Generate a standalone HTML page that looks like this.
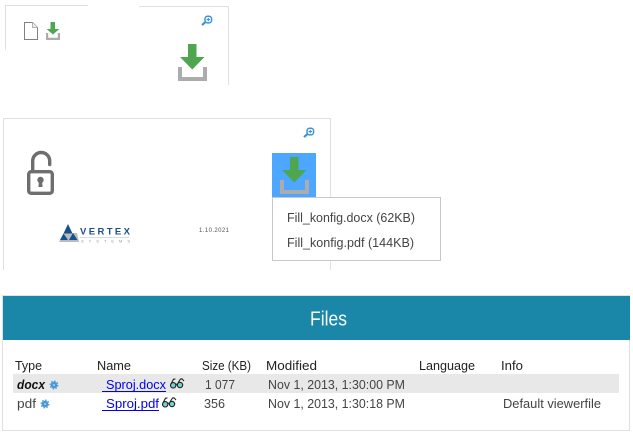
<!DOCTYPE html>
<html><head><meta charset="utf-8"><style>
html,body{margin:0;padding:0;background:#fff;width:633px;height:437px;overflow:hidden}
svg{display:block}
text{font-family:"Liberation Sans",sans-serif;font-size:13px;fill:#444}
.h{fill:#222}
.soft{filter:blur(.35px)}
</style></head><body>
<svg width="633" height="437" viewBox="0 0 633 437" xmlns="http://www.w3.org/2000/svg">
<defs>
<g id="dl">
<path d="M0 23h4v10h21V23H29v14H0z" fill="#acacac"/>
<path d="M10 0h8.500v13H26.500L14.300 25.500 2 13h8z" fill="#4ea64e"/>
</g>
<g id="zoom" fill="none">
<rect x="4" y="0.800" width="6.600" height="6.600" rx="2.600" stroke="#3c94e0" stroke-width="1.500"/>
<path d="M5.600 4.100h3.400M7.300 2.400v3.400" stroke="#3c94e0" stroke-width="1.100"/>
<path d="M4.300 6.700L1 9.600" stroke="#3c94e0" stroke-width="2.200"/>
</g>
<g id="gear">
<circle cx="4" cy="4" r="3.400" fill="#4a98d8"/>
<circle cx="4" cy="4" r="3.900" fill="none" stroke="#4a98d8" stroke-width="1.200" stroke-dasharray="1.500 1.560"/>
<circle cx="4" cy="4" r="1" fill="#a8d0f0"/>
</g>
<g id="glasses" fill="none" stroke="#222" stroke-width="1.100">
<circle cx="3.200" cy="7.300" r="2.700" fill="#6fd3d3"/>
<circle cx="10" cy="7" r="2.700" fill="#6fd3d3"/>
<path d="M5.800 6.500c.6-.5 1-.5 1.600 0M1 6L3.500 1.200L5.500 1M8 5L10.500 1L12 .8L14 3"/>
</g>
</defs>

<!-- top panel -->
<rect x="5" y="5" width="83" height="1" fill="#e0e0e0"/>
<rect x="5" y="5" width="1" height="45" fill="#e0e0e0"/>
<rect x="139" y="6" width="90" height="1" fill="#e0e0e0"/>
<rect x="228" y="6" width="1" height="79" fill="#e0e0e0"/>
<path d="M24.500 22.500h8l5 5v12h-13z" fill="#fff" stroke="#808080"/>
<path d="M32.500 22.500v5h5" fill="#eee" stroke="#b0b0b0"/>
<path d="M46 33h2.200v4.700h9.600V33H60v7H46z" fill="#acacac"/>
<path d="M50.500 22h4.500v7h4.300L53 34.500 46.700 29h3.800z" fill="#4ea64e"/>
<use href="#zoom" x="201" y="15.500"/>
<use href="#dl" x="178" y="44" class="soft"/>

<!-- second panel -->
<rect x="3" y="118" width="328" height="1" fill="#e0e0e0"/>
<rect x="3" y="118" width="1" height="152" fill="#e0e0e0"/>
<rect x="330" y="118" width="1" height="152" fill="#e0e0e0"/>
<use href="#zoom" x="303" y="127.500"/>
<g class="soft">
<path d="M32.700 171v-10a8.500 8.500 0 0 1 17 0v3.500" fill="none" stroke="#6e6e6e" stroke-width="3.400" stroke-linecap="round"/>
<rect x="28.700" y="171.700" width="23.600" height="21.600" rx="2.500" fill="#fff" stroke="#6e6e6e" stroke-width="3.400"/>
<circle cx="40.500" cy="180" r="3.200" fill="#6e6e6e"/>
<path d="M39 181h3l.6 6h-4.200z" fill="#6e6e6e"/>
</g>

<!-- logo -->
<g style="filter:blur(.3px)">
<path d="M59 242l5-9h13l2 9z" fill="#bbb"/>
<path d="M68 224l4.500 9.500h-9z M63.500 233.500l4.500 6.500h-8z M73 233l4.500 7h-8.500z" fill="#17508f"/>
<text x="80" y="234.500" textLength="50" style="font-size:9.500px;font-weight:bold;fill:#1b4f8a">VERTEX</text>
<rect x="80" y="237" width="49" height="1" fill="#d8dde5"/>
<text x="81" y="242.500" textLength="49" style="font-size:4px;fill:#8a97a8">SYSTEMS</text>
<text x="199" y="232" textLength="30" style="font-size:6px;fill:#555">1.10.2021</text>
</g>

<!-- button + menu -->
<rect x="272" y="153" width="44" height="44" fill="#4da6ff"/>
<use href="#dl" x="280" y="157" class="soft"/>
<rect x="272.500" y="197.500" width="168" height="63" fill="#fff" stroke="#c8c8c8"/>
<text x="287" y="222" textLength="128" lengthAdjust="spacingAndGlyphs">Fill_konfig.docx (62KB)</text>
<text x="287" y="247" textLength="127" lengthAdjust="spacingAndGlyphs">Fill_konfig.pdf (144KB)</text>

<!-- files panel -->
<rect x="2.500" y="295.500" width="627" height="135" fill="#fff" stroke="#e0e0e0"/>
<rect x="3" y="296" width="627" height="44" fill="#1b87a8"/>
<text x="310" y="325.500" textLength="37" lengthAdjust="spacingAndGlyphs" style="font-size:20.500px;fill:#f4fbfd">Files</text>

<text class="h" x="15" y="370" textLength="27" lengthAdjust="spacingAndGlyphs">Type</text>
<text class="h" x="97" y="370" textLength="34" lengthAdjust="spacingAndGlyphs">Name</text>
<text class="h" x="202" y="370" textLength="49" lengthAdjust="spacingAndGlyphs">Size (KB)</text>
<text class="h" x="266" y="370" textLength="51" lengthAdjust="spacingAndGlyphs">Modified</text>
<text class="h" x="419" y="370" textLength="56" lengthAdjust="spacingAndGlyphs">Language</text>
<text class="h" x="501" y="370" textLength="22" lengthAdjust="spacingAndGlyphs">Info</text>

<rect x="13" y="374" width="606" height="19" fill="#e8e8e8"/>
<text x="17" y="389" textLength="28" lengthAdjust="spacingAndGlyphs" style="font-weight:bold;font-style:italic;fill:#111">docx</text>
<use href="#gear" x="50" y="381"/>
<rect x="102" y="391" width="64" height="1" fill="#0000ee"/>
<text x="106" y="389" textLength="60" lengthAdjust="spacingAndGlyphs" style="fill:#0000ee">Sproj.docx</text>
<use href="#glasses" x="170" y="378"/>
<text x="205" y="389" textLength="30" lengthAdjust="spacingAndGlyphs">1 077</text>
<text x="268" y="389" textLength="137" lengthAdjust="spacingAndGlyphs">Nov 1, 2013, 1:30:00 PM</text>

<text x="17" y="408" textLength="19" lengthAdjust="spacingAndGlyphs">pdf</text>
<use href="#gear" x="41" y="400"/>
<rect x="102" y="410" width="57" height="1" fill="#0000ee"/>
<text x="106" y="408" textLength="53" lengthAdjust="spacingAndGlyphs" style="fill:#0000ee">Sproj.pdf</text>
<use href="#glasses" x="162" y="397"/>
<text x="204" y="408" textLength="21" lengthAdjust="spacingAndGlyphs">356</text>
<text x="268" y="408" textLength="137" lengthAdjust="spacingAndGlyphs">Nov 1, 2013, 1:30:18 PM</text>
<text x="503" y="408" textLength="98" lengthAdjust="spacingAndGlyphs">Default viewerfile</text>
</svg>
</body></html>
